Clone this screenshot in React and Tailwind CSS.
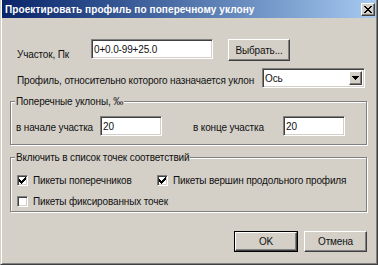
import React from 'react';

const raised = "border border-t-white border-l-white border-r-[#404040] border-b-[#404040] shadow-[inset_-1px_-1px_0_#808080]";
const sunken = "border border-t-[#808080] border-l-[#808080] border-r-white border-b-white shadow-[inset_1px_1px_0_#404040,inset_-1px_-1px_0_#d4d0c8]";
const group = "border border-[#808080] shadow-[inset_1px_1px_0_#fff,1px_1px_0_#fff] w-[357px] flex flex-col";

function Check({ checked }) {
    return (
        <div className={`w-[11px] h-[11px] shrink-0 bg-white ${sunken} flex items-center justify-center`}>
            {checked && (
                <svg width="7" height="7" viewBox="0 0 7 7" shapeRendering="crispEdges">
                    <path d="M0 2h1v3h-1zM1 3h1v3h-1zM2 4h1v3h-1zM3 3h1v3h-1zM4 2h1v3h-1zM5 1h1v3h-1zM6 0h1v3h-1z" fill="#000" />
                </svg>
            )}
        </div>
    );
}

function Field({ value, className }) {
    return (
        <div className={`h-[20px] shrink-0 bg-white ${sunken} pl-[2px] flex items-center ${className}`}>
            {value}
        </div>
    );
}

function Legend({ children }) {
    return <div className="-mt-[7px] ml-[4px] px-[1px] w-fit h-[13px] leading-[13px] bg-[#d4d0c8]">{children}</div>;
}

export default function App() {
    return (
        <div className="w-[378px] h-[265px] overflow-hidden whitespace-nowrap bg-[#d4d0c8] text-[#111] text-[10px] leading-[13px] tracking-[-0.15px] font-['Liberation_Sans',Arial,sans-serif] border-l border-r border-b border-l-[#d4d0c8] border-r-[#404040] border-b-[#404040] shadow-[inset_1px_0_0_#fff,inset_-1px_0_0_#808080,inset_0_-1px_0_#808080] px-[1px] flex flex-col">
            <div className="h-[18px] shrink-0 bg-gradient-to-r from-[#0a246a] to-[#a6caf0] flex items-center pl-[3px] pr-[1px]">
                <span className="text-white font-bold text-[10px] tracking-[0.1px]">Проектировать профиль по поперечному уклону</span>
                <div className={`ml-auto w-[14px] h-[13px] bg-[#d4d0c8] ${raised} flex items-center justify-center`}>
                    <svg width="8" height="7" viewBox="0 0 8 7" shapeRendering="crispEdges">
                        <path d="M0 0h2v1h-2zM6 0h2v1h-2zM1 1h2v1h-2zM5 1h2v1h-2zM2 2h4v1h-4zM3 3h2v1h-2zM2 4h4v1h-4zM1 5h2v1h-2zM5 5h2v1h-2zM0 6h2v1h-2zM6 6h2v1h-2z" fill="#000" />
                    </svg>
                </div>
            </div>

            <div className="flex flex-col px-[8px]">
                <div className="flex items-start mt-[21px] ml-[7px]">
                    <div className="w-[74px] pt-[9px]">Участок, Пк</div>
                    <Field value="0+0.0-99+25.0" className="w-[122px]" />
                    <div className={`ml-[15px] w-[62px] h-[22px] ${raised} flex items-center justify-center`}>Выбрать...</div>
                </div>

                <div className="flex items-start mt-[7px] ml-[7px]">
                    <div className="w-[245px] pt-[6px]">Профиль, относительно которого назначается уклон</div>
                    <div className={`w-[103px] h-[20px] bg-white ${sunken} flex items-center pl-[2px] pr-[2px]`}>
                        <span>Ось</span>
                        <div className={`ml-auto w-[13px] h-[14px] bg-[#d4d0c8] ${raised} flex items-center justify-center`}>
                            <svg width="7" height="4" viewBox="0 0 7 4" shapeRendering="crispEdges">
                                <path d="M0 0h7v1h-7zM1 1h5v1h-5zM2 2h3v1h-3zM3 3h1v1h-1z" fill="#000" />
                            </svg>
                        </div>
                    </div>
                </div>

                <div className={`${group} mt-[13px] pb-[8px]`}>
                    <Legend>Поперечные уклоны, ‰</Legend>
                    <div className="flex items-start mt-[8px] ml-[5px]">
                        <div className="w-[84px] pt-[5px]">в начале участка</div>
                        <Field value="20" className="w-[62px]" />
                        <div className="ml-[31px] w-[90px] pt-[5px]">в конце участка</div>
                        <Field value="20" className="w-[62px]" />
                    </div>
                </div>

                <div className={`${group} mt-[12px] pb-[4px]`}>
                    <Legend>Включить в список точек соответствий</Legend>
                    <div className="flex items-center mt-[11px] ml-[6px] h-[11px]">
                        <Check checked />
                        <span className="ml-[5px] w-[124px]">Пикеты поперечников</span>
                        <Check checked />
                        <span className="ml-[5px]">Пикеты вершин продольного профиля</span>
                    </div>
                    <div className="flex items-center mt-[10px] ml-[6px] h-[11px]">
                        <Check />
                        <span className="ml-[5px]">Пикеты фиксированных точек</span>
                    </div>
                </div>

                <div className="w-[357px] flex justify-end gap-[6px] mt-[19px]">
                    <div className="w-[64px] h-[21px] border border-black flex">
                        <div className={`flex-1 ${raised} flex items-center justify-center`}>OK</div>
                    </div>
                    <div className={`w-[63px] h-[21px] ${raised} flex items-center justify-center`}>Отмена</div>
                </div>
            </div>
        </div>
    );
}
